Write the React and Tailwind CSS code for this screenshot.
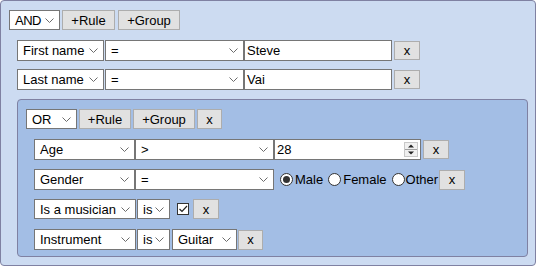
import React from "react";

const font = { fontFamily: '"Liberation Sans", Arial, sans-serif' };

function Chevron() {
  return (
    <svg width="9" height="5" viewBox="0 0 9 5" className="shrink-0">
      <path d="M0.5 0.5 L4.5 4.5 L8.5 0.5" fill="none" stroke="#6b6b6b" strokeWidth="1" />
    </svg>
  );
}

function Select({ className, children }) {
  return (
    <div className={"flex items-center justify-between bg-white border border-[#767676] pl-[5px] pr-[5px] text-[13px] text-black leading-none shrink-0 " + className}>
      <span>{children}</span>
      <Chevron />
    </div>
  );
}

function Btn({ className, children }) {
  return (
    <div className={"flex items-center justify-center bg-[#e1e1e1] border border-[#adadad] text-[13px] text-black leading-none shrink-0 " + className}>
      {children}
    </div>
  );
}

function Radio({ checked }) {
  return (
    <div className="w-[13px] h-[13px] rounded-full border border-[#333333] bg-white flex items-center justify-center shrink-0">
      {checked ? <div className="w-[7px] h-[7px] rounded-full bg-[#333333]" /> : null}
    </div>
  );
}

function Spinner() {
  return (
    <svg width="14" height="15" viewBox="0 0 14 15" className="shrink-0">
      <rect x="0.5" y="0.5" width="13" height="14" fill="#f0f0f0" stroke="#c8c8c8" />
      <line x1="1" y1="7.5" x2="13" y2="7.5" stroke="#a0a0a0" />
      <path d="M4 5.5 L7 2.5 L10 5.5 Z" fill="#222" />
      <path d="M4 9.5 L7 12.5 L10 9.5 Z" fill="#222" />
    </svg>
  );
}

export default function App() {
  return (
    <div className="w-[537px] h-[267px] bg-white" style={font}>
      <div className="w-[536px] h-[266px] border border-[#7f81a2] rounded-[4px] bg-[#ccdbf1] pt-[9px] pl-[8px] pr-[8px]">
        {/* header */}
        <div className="flex items-center h-[20px]">
          <Select className="w-[51px] h-[20px] tracking-[-0.5px]">AND</Select>
          <Btn className="ml-[2px] w-[53px] h-[20px]">+Rule</Btn>
          <Btn className="ml-[3px] w-[62px] h-[20px]">+Group</Btn>
        </div>
        {/* rule 1 */}
        <div className="flex items-center h-[21px] mt-[10px] ml-[8px]">
          <Select className="w-[87px] h-[21px]">First name</Select>
          <Select className="ml-[1px] w-[139px] h-[21px]">=</Select>
          <div className="w-[148px] h-[21px] bg-white border border-[#767676] flex items-center pl-[2px] text-[13px] leading-none shrink-0">Steve</div>
          <Btn className="ml-[2px] w-[26px] h-[19px]">x</Btn>
        </div>
        {/* rule 2 */}
        <div className="flex items-center h-[21px] mt-[8px] ml-[8px]">
          <Select className="w-[87px] h-[21px]">Last name</Select>
          <Select className="ml-[1px] w-[139px] h-[21px]">=</Select>
          <div className="w-[148px] h-[21px] bg-white border border-[#767676] flex items-center pl-[2px] text-[13px] leading-none shrink-0">Vai</div>
          <Btn className="ml-[2px] w-[26px] h-[19px]">x</Btn>
        </div>
        {/* inner group */}
        <div className="mt-[9px] ml-[8px] w-[511px] h-[158px] border border-[#7f81a2] rounded-[4px] bg-[#a3bee5] pt-[9px] pl-[8px]">
          <div className="flex items-center h-[20px]">
            <Select className="w-[51px] h-[20px]">OR</Select>
            <Btn className="ml-[2px] w-[52px] h-[20px]">+Rule</Btn>
            <Btn className="ml-[2px] w-[62px] h-[20px]">+Group</Btn>
            <Btn className="ml-[2px] w-[25px] h-[20px]">x</Btn>
          </div>
          {/* Age */}
          <div className="flex items-center h-[21px] mt-[10px] ml-[8px]">
            <Select className="w-[101px] h-[21px]">Age</Select>
            <Select className="w-[139px] h-[21px]">&gt;</Select>
            <div className="w-[147px] h-[21px] bg-white border border-[#767676] flex items-center justify-between pl-[2px] pr-[2px] text-[13px] leading-none shrink-0">
              <span>28</span>
              <Spinner />
            </div>
            <Btn className="ml-[2px] w-[26px] h-[19px]">x</Btn>
          </div>
          {/* Gender */}
          <div className="flex items-center h-[21px] mt-[9px] ml-[8px] text-[13px] leading-none">
            <Select className="w-[101px] h-[21px]">Gender</Select>
            <Select className="w-[139px] h-[21px]">=</Select>
            <div className="ml-[6px]"><Radio checked /></div>
            <span className="ml-[2px]">Male</span>
            <div className="ml-[5px]"><Radio /></div>
            <span className="ml-[2px]">Female</span>
            <div className="ml-[5px]"><Radio /></div>
            <span className="ml-[1px]">Other</span>
            <Btn className="ml-[1px] w-[26px] h-[20px]">x</Btn>
          </div>
          {/* musician */}
          <div className="flex items-center h-[20px] mt-[9px] ml-[8px]">
            <Select className="w-[102px] h-[20px]">Is a musician</Select>
            <Select className="ml-[1px] w-[33px] h-[20px]">is</Select>
            <div className="ml-[7px] w-[12px] h-[12px] border border-[#333333] bg-white flex items-center justify-center shrink-0">
              <svg width="10" height="10" viewBox="0 0 10 10">
                <path d="M1.5 5 L4 7.5 L9 2" fill="none" stroke="#222" strokeWidth="1.2" />
              </svg>
            </div>
            <Btn className="ml-[4px] w-[26px] h-[20px]">x</Btn>
          </div>
          {/* Instrument */}
          <div className="flex items-center h-[21px] mt-[10px] ml-[8px]">
            <Select className="w-[102px] h-[21px]">Instrument</Select>
            <Select className="ml-[1px] w-[33px] h-[21px]">is</Select>
            <Select className="ml-[2px] w-[65px] h-[21px]">Guitar</Select>
            <Btn className="ml-[1px] w-[25px] h-[20px]">x</Btn>
          </div>
        </div>
      </div>
    </div>
  );
}
